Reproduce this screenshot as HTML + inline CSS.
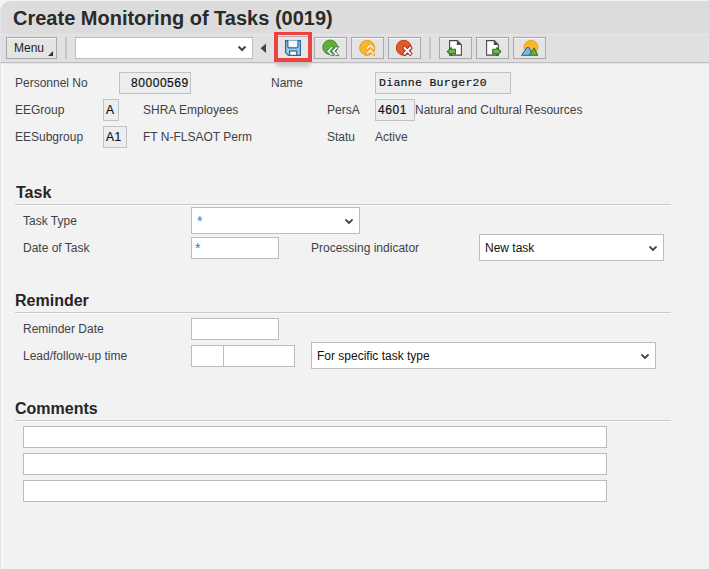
<!DOCTYPE html>
<html><head><meta charset="utf-8">
<style>
*{margin:0;padding:0;box-sizing:border-box}
html,body{width:709px;height:569px;overflow:hidden;background:#f2f2f2;font-family:"Liberation Sans",sans-serif;font-size:12px;color:#333}
.a{position:absolute}
#frame{left:0;top:64px;width:3px;height:505px;border-left:1px solid #e2e2e2;background:#f6f6f6}
#hdr{left:0;top:1px;width:709px;height:33px;background:#dcdcdc;border-top-left-radius:10px;border-left:1px solid #e4e4e4}
#top{left:0;top:0;width:709px;height:1px;background:#f2f2f2}
#hl0{left:0;top:0;width:12px;height:12px;background:#f4f4f4}
#tb{left:0;top:34px;width:709px;height:29px;background:#e0e0e0;border-top:1px solid #e6e6e6;border-bottom:1px solid #bdbdbd;border-left:1px solid #e6e6e6}
#tb2{left:0;top:63px;width:709px;height:1px;background:#e6e6e6}
#title{left:13px;top:7px;font-size:20px;font-weight:bold;color:#2a2a2a;white-space:nowrap}
.btn{position:absolute;top:37px;height:22px;background:#e4e4e4;border:1px solid #a9a9a9;box-shadow:inset 0 1px 0 #fafafa}
.sep{position:absolute;top:37px;width:2px;height:22px;background:#c6c6c6}
.lbl{position:absolute;white-space:nowrap;color:#3d4249}
.ro{position:absolute;background:#ecedef;border:1px solid #c2c2c2;font-family:"Liberation Mono",monospace;color:#111;white-space:pre}
.ro span{position:absolute;top:3px;font-size:11.5px;letter-spacing:0.3px;-webkit-text-stroke:0.15px #111}
.ro span.s{font-family:"Liberation Sans",sans-serif;font-size:12px;letter-spacing:0.55px;top:3px;-webkit-text-stroke:0.2px #111}
.in{position:absolute;background:#fff;border:1px solid #bdbdbd}
.h{position:absolute;font-size:16px;font-weight:bold;color:#262626;white-space:nowrap}
.hl{position:absolute;left:15px;width:656px;height:1px;background:#cacaca;box-shadow:0 1px 0 #f9f9f9}
.dd{position:absolute;color:#111}
svg{position:absolute;overflow:visible}
.ast{position:absolute;color:#3a7bbf;font-size:14px}
</style></head><body>
<div id="top" class="a"></div><div id="hl0" class="a"></div><div id="hdr" class="a"></div>
<div id="tb" class="a"></div>
<div id="tb2" class="a"></div>
<div id="frame" class="a"></div>
<div id="title" class="a">Create Monitoring of Tasks (0019)</div>

<!-- toolbar -->
<div class="btn" style="left:6px;width:51px"></div>
<div class="lbl" style="left:14px;top:41px;color:#222">Menu</div>
<svg style="left:48px;top:51px" width="6" height="6"><path d="M5 0 L5 5 L0 5 Z" fill="#333"/></svg>
<div class="sep" style="left:65px"></div>
<div class="in" style="left:75px;top:37px;width:178px;height:22px;border-color:#bdbdbd"></div>
<svg style="left:237px;top:45px" width="10" height="7"><path d="M1.5 1.5 L5 5 L8.5 1.5" fill="none" stroke="#444" stroke-width="2"/></svg>
<svg style="left:260px;top:43px" width="7" height="11"><path d="M6 0.5 L6 10 L0.5 5.25 Z" fill="#444"/></svg>

<!-- save button with red box -->
<div class="a" style="left:276px;top:61px;width:34px;height:5px;background:#c0c0c0;filter:blur(2px)"></div>
<div class="a" style="left:277px;top:35px;width:33px;height:24px;background:#f0e2e2"></div><div class="btn" style="left:277px;top:36px;width:33px;height:23px;border-color:#bfa9a9;box-shadow:none;background:#e6e6e6"></div>
<div class="a" style="left:274px;top:32px;width:38px;height:30px;border:4px solid #eb4242;border-top-width:3px"></div>
<svg style="left:285px;top:40px" width="16" height="16" viewBox="0 0 16 16">
<path d="M0.6 0.6 H15.4 V15.4 H3.4 L0.6 12.6 Z" fill="#9dcdef" stroke="#2a6590" stroke-width="1.2"/>
<path d="M2.8 0.6 V6.6 Q2.8 7.9 4.1 7.9 H11.7 Q13 7.9 13 6.6 V0.6" fill="#eef8ff" stroke="#2a6590" stroke-width="1.2"/>
<rect x="4.6" y="11" width="7.2" height="4.4" fill="#f4fbff" stroke="#2a6590" stroke-width="1.2"/>
</svg>

<!-- green back -->
<div class="btn" style="left:314px;width:33px"></div>
<svg style="left:0;top:0" width="709" height="70">
<circle cx="330.1" cy="47.3" r="7.3" fill="#5fae35" stroke="#3f7f2a" stroke-width="0.9"/>
<path d="M326.6 51.2 L330.8 46.8 H334 L329.9 51.2 L334 55.6 H330.8 Z M331.6 51.2 L335.8 46.8 H339 L334.9 51.2 L339 55.6 H335.8 Z" fill="#f2fff0" stroke="#2f6a3c" stroke-width="0.8" stroke-linejoin="round"/>
</svg>
<!-- yellow up -->
<div class="btn" style="left:351px;width:33px"></div>
<svg style="left:0;top:0" width="709" height="70">
<circle cx="367.2" cy="47.8" r="7.5" fill="#f7b928" stroke="#e49420" stroke-width="0.9"/>
<path d="M370.3 43.6 L374.4 47.8 V50.9 L370.3 46.9 L366.2 50.9 V47.8 Z M370.3 48.8 L374.4 53 V56 L370.3 52.1 L366.2 56 V53 Z" fill="#fff6dc" stroke="#e48a1e" stroke-width="0.8" stroke-linejoin="round"/>
</svg>
<!-- red cancel -->
<div class="btn" style="left:388px;width:33px"></div>
<svg style="left:0;top:0" width="709" height="70">
<circle cx="403.8" cy="47.8" r="7.5" fill="#e25a27" stroke="#a8391f" stroke-width="0.9"/>
<path d="M404.6 47.9 L410.2 53.6 M410.2 47.9 L404.6 53.6" fill="none" stroke="#9c2f23" stroke-width="3.8" stroke-linecap="square"/>
<path d="M404.6 47.9 L410.2 53.6 M410.2 47.9 L404.6 53.6" fill="none" stroke="#fff" stroke-width="2" stroke-linecap="square"/>
</svg>
<div class="sep" style="left:429px"></div>
<!-- doc left -->
<div class="btn" style="left:439px;width:33px"></div>
<div class="btn" style="left:476px;width:33px"></div>
<div class="btn" style="left:513px;width:33px"></div>
<svg style="left:0;top:0" width="709" height="70">
<path d="M449.6 40.6 H457.3 L461.4 44.7 V55.1 H449.6 Z" fill="#fff" stroke="#4a4a4a" stroke-width="1.1"/>
<path d="M456.8 40.6 V45 H461.4 Z" fill="#4a4a4a"/>
<path d="M447.3 51.6 L451.3 47.6 V49.3 H455.4 V53.9 H451.3 V55.6 Z" fill="#6cba3e" stroke="#2c6e2a" stroke-width="1.1" stroke-linejoin="round"/>
<path d="M486.6 40.6 H494.3 L498.4 44.7 V55.1 H486.6 Z" fill="#fff" stroke="#4a4a4a" stroke-width="1.1"/>
<path d="M493.8 40.6 V45 H498.4 Z" fill="#4a4a4a"/>
<path d="M500.8 51.6 L496.8 47.6 V49.3 H492.7 V53.9 H496.8 V55.6 Z" fill="#6cba3e" stroke="#2c6e2a" stroke-width="1.1" stroke-linejoin="round"/>
<circle cx="531" cy="47.2" r="7" fill="#f8b828" stroke="#eb9a22" stroke-width="0.8"/>
<path d="M521.5 55.3 L526.9 47.6 L528.8 47.4 L531.3 52.3 L529.2 55.3 Z" fill="#7db8e4" stroke="#265d8c" stroke-width="1" stroke-linejoin="round"/>
<path d="M529.2 55.3 L534.2 47.9 L537.8 55.3 Z" fill="#67b23b" stroke="#356d2b" stroke-width="1" stroke-linejoin="round"/>
</svg>

<!-- header fields -->
<div class="lbl" style="left:15px;top:76px">Personnel No</div>
<div class="ro" style="left:119px;top:72px;width:72px;height:22px"><span class="s" style="left:11px">80000569</span></div>
<div class="lbl" style="left:271px;top:76px">Name</div>
<div class="ro" style="left:375px;top:72px;width:136px;height:22px"><span style="left:3px">Dianne Burger20</span></div>

<div class="lbl" style="left:15px;top:103px">EEGroup</div>
<div class="ro" style="left:103px;top:99px;width:16px;height:22px"><span class="s" style="left:2px">A</span></div>
<div class="lbl" style="left:143px;top:103px">SHRA Employees</div>
<div class="lbl" style="left:327px;top:103px">PersA</div>
<div class="ro" style="left:375px;top:99px;width:40px;height:22px"><span class="s" style="left:2px">4601</span></div>
<div class="lbl" style="left:415px;top:103px">Natural and Cultural Resources</div>

<div class="lbl" style="left:15px;top:130px">EESubgroup</div>
<div class="ro" style="left:103px;top:126px;width:24px;height:22px"><span class="s" style="left:2px">A1</span></div>
<div class="lbl" style="left:143px;top:130px">FT N-FLSAOT Perm</div>
<div class="lbl" style="left:327px;top:130px">Statu</div>
<div class="lbl" style="left:375px;top:130px">Active</div>

<!-- Task -->
<div class="h" style="left:16px;top:184px">Task</div>
<div class="hl" style="top:204px"></div>
<div class="lbl" style="left:23px;top:214px">Task Type</div>
<div class="in" style="left:191px;top:207px;width:169px;height:27px"></div>
<div class="ast" style="left:197px;top:213px">*</div>
<svg style="left:345px;top:219px" width="9" height="6"><path d="M1 1 L4 4 L7 1" fill="none" stroke="#4a4a4a" stroke-width="1.8" stroke-linecap="round" stroke-linejoin="round"/></svg>
<div class="lbl" style="left:23px;top:241px">Date of Task</div>
<div class="in" style="left:191px;top:237px;width:88px;height:22px"></div>
<div class="ast" style="left:195px;top:240px">*</div>
<div class="lbl" style="left:311px;top:241px">Processing indicator</div>
<div class="in" style="left:479px;top:234px;width:185px;height:27px"></div>
<div class="dd" style="left:485px;top:241px">New task</div>
<svg style="left:649px;top:246px" width="9" height="6"><path d="M1 1 L4 4 L7 1" fill="none" stroke="#4a4a4a" stroke-width="1.8" stroke-linecap="round" stroke-linejoin="round"/></svg>

<!-- Reminder -->
<div class="h" style="left:15px;top:292px">Reminder</div>
<div class="hl" style="top:312px"></div>
<div class="lbl" style="left:23px;top:322px">Reminder Date</div>
<div class="in" style="left:191px;top:318px;width:88px;height:22px"></div>
<div class="lbl" style="left:23px;top:349px">Lead/follow-up time</div>
<div class="in" style="left:191px;top:345px;width:33px;height:22px"></div>
<div class="in" style="left:223px;top:345px;width:72px;height:22px"></div>
<div class="in" style="left:311px;top:342px;width:345px;height:27px"></div>
<div class="dd" style="left:317px;top:349px">For specific task type</div>
<svg style="left:641px;top:354px" width="9" height="6"><path d="M1 1 L4 4 L7 1" fill="none" stroke="#4a4a4a" stroke-width="1.8" stroke-linecap="round" stroke-linejoin="round"/></svg>

<!-- Comments -->
<div class="h" style="left:15px;top:400px">Comments</div>
<div class="hl" style="top:420px"></div>
<div class="in" style="left:23px;top:426px;width:584px;height:22px"></div>
<div class="in" style="left:23px;top:453px;width:584px;height:22px"></div>
<div class="in" style="left:23px;top:480px;width:584px;height:22px"></div>
</body></html>
